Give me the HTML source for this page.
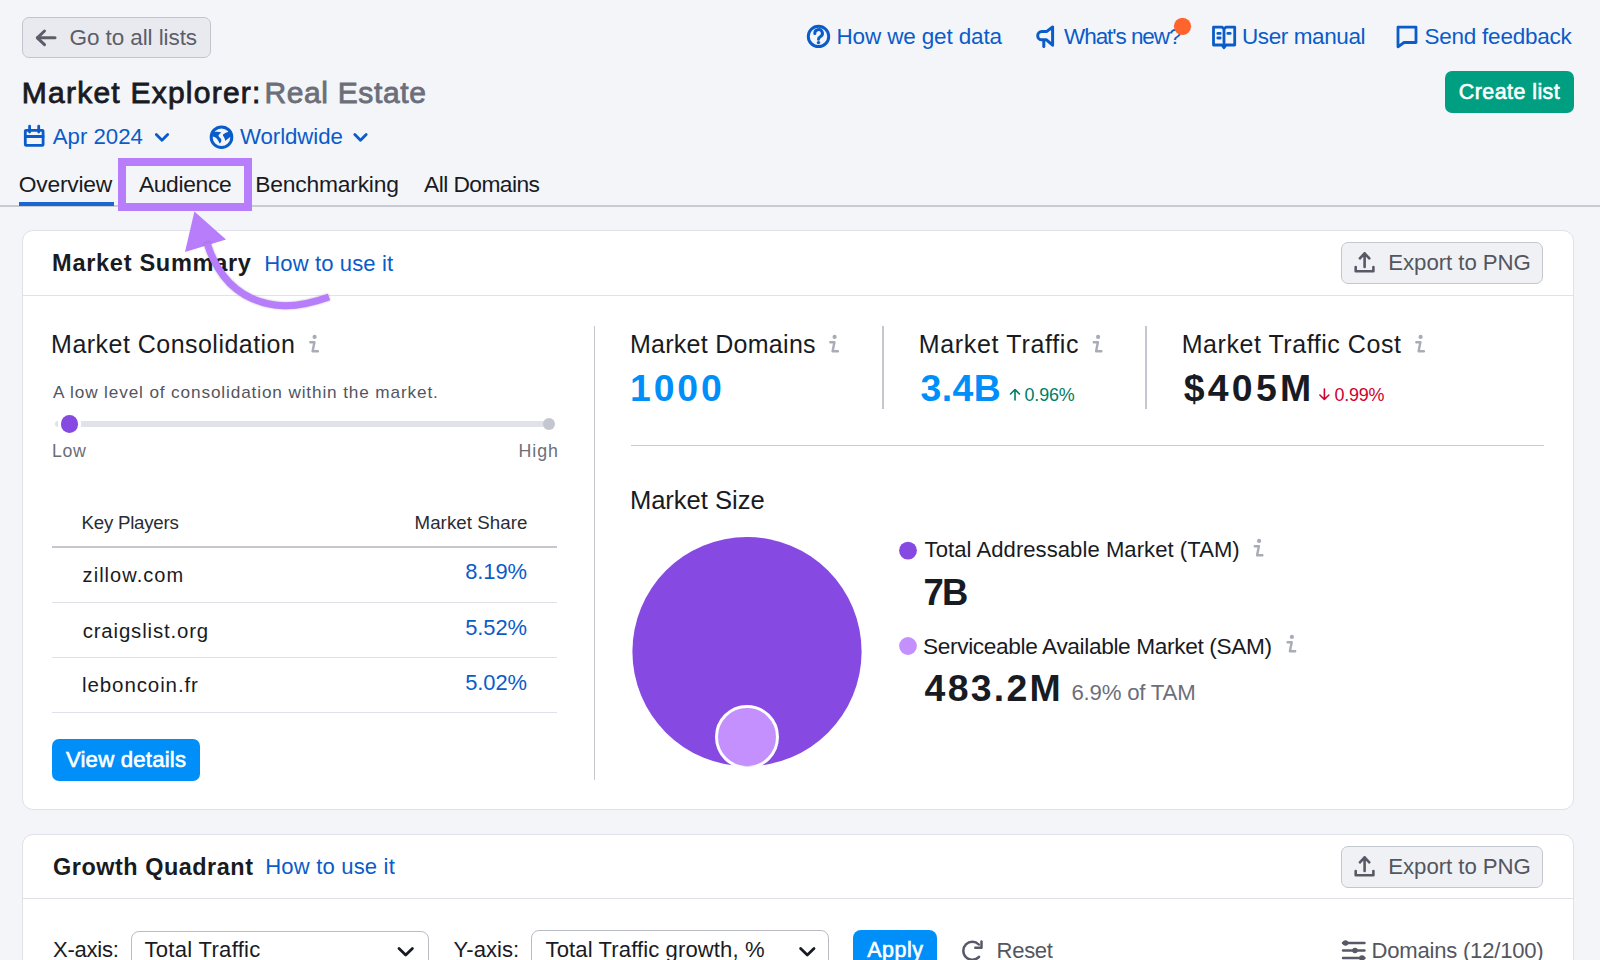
<!DOCTYPE html>
<html><head><meta charset="utf-8">
<style>
html,body{margin:0;padding:0;}
body{width:1600px;height:960px;overflow:hidden;background:#f4f5f9;position:relative;font-family:"Liberation Sans",sans-serif;}
.t{position:absolute;line-height:0;white-space:nowrap;}
.abs{position:absolute;}
.card{position:absolute;background:#fff;border:1px solid #e0e1e9;border-radius:11px;box-sizing:border-box;}
.hline{position:absolute;height:1px;background:#e0e1e9;}
.btn-gray{position:absolute;box-sizing:border-box;background:#f0f1f5;border:1px solid #c4c7cf;border-radius:7px;}
svg.ov{position:absolute;left:0;top:0;}
</style></head><body>
<!-- back button -->
<div class="btn-gray" style="left:22.3px;top:17.2px;width:188.5px;height:41.3px;background:#e9eaef;border-color:#c2c5cd;border-width:1.3px"></div>
<!-- tabs line -->
<div class="abs" style="left:0;top:205px;width:1600px;height:1.5px;background:#c9cbd3"></div>
<div class="abs" style="left:19px;top:202px;width:95px;height:4px;background:#1b66d1;"></div>
<!-- create list -->
<div class="abs" style="left:1445px;top:70.5px;width:129px;height:42px;border-radius:7px;background:#009f81"></div>
<!-- card 1 -->
<div class="card" style="left:21.5px;top:229.5px;width:1552.3px;height:580.5px;"></div>
<div class="hline" style="left:23px;top:294.5px;width:1550px;height:1.5px"></div>
<div class="btn-gray" style="left:1341px;top:242px;width:202px;height:41.5px;"></div>
<!-- divider -->
<div class="abs" style="left:593.5px;top:326px;width:1.6px;height:454px;background:#c4c7cf"></div>
<!-- slider -->
<div class="abs" style="left:55px;top:421px;width:491px;height:6px;border-radius:3px;background:#e0e1e9"></div>
<div class="abs" style="left:543px;top:418px;width:12px;height:12px;border-radius:50%;background:#c4c7cf"></div>
<div class="abs" style="left:57.8px;top:412.3px;width:23.4px;height:23.4px;border-radius:50%;background:#fff"></div>
<div class="abs" style="left:60.7px;top:415.2px;width:17.6px;height:17.6px;border-radius:50%;background:#8649e1"></div>
<!-- table lines -->
<div class="abs" style="left:52px;top:546px;width:505px;height:2px;background:#c4c7cf"></div>
<div class="abs" style="left:52px;top:601.5px;width:505px;height:1.3px;background:#e0e1e9"></div>
<div class="abs" style="left:52px;top:657px;width:505px;height:1.3px;background:#e0e1e9"></div>
<div class="abs" style="left:52px;top:712px;width:505px;height:1.3px;background:#e0e1e9"></div>
<!-- view details -->
<div class="abs" style="left:52px;top:738.5px;width:148px;height:42px;border-radius:7px;background:#008ff8"></div>
<!-- metrics dividers -->
<div class="abs" style="left:882px;top:326px;width:1.6px;height:83px;background:#c4c7cf"></div>
<div class="abs" style="left:1145.2px;top:326px;width:1.6px;height:83px;background:#c4c7cf"></div>
<div class="abs" style="left:631px;top:444.6px;width:912.5px;height:1.8px;background:#c9cbd3"></div>
<!-- card 2 -->
<div class="card" style="left:21.5px;top:833.5px;width:1552.3px;height:200px;"></div>
<div class="hline" style="left:23px;top:897.5px;width:1550px;height:1.5px"></div>
<div class="btn-gray" style="left:1341px;top:846px;width:202px;height:41.5px;"></div>
<div class="abs" style="left:130.5px;top:930.5px;width:298px;height:60px;box-sizing:border-box;border:1.3px solid #b9bcc6;border-radius:8px;background:#fff"></div>
<div class="abs" style="left:531px;top:930px;width:298px;height:60px;box-sizing:border-box;border:1.3px solid #b9bcc6;border-radius:8px;background:#fff"></div>
<div class="abs" style="left:853px;top:929.8px;width:84px;height:60px;border-radius:8px;background:#008ff8"></div>

<div class="t" style="left:69.5px;top:37.8px;font-size:22.51px;font-weight:400;color:#5b5e69;letter-spacing:-0.089px">Go to all lists</div>
<div class="t" style="left:21.8px;top:92.5px;font-size:30.00px;font-weight:400;color:#191b23;letter-spacing:1.235px;-webkit-text-stroke:0.84px #191b23">Market Explorer:</div>
<div class="t" style="left:264.4px;top:92.5px;font-size:30.00px;font-weight:400;color:#6c6e79;letter-spacing:0.646px;-webkit-text-stroke:0.84px #6c6e79">Real Estate</div>
<div class="t" style="left:52.8px;top:136.5px;font-size:22.22px;font-weight:400;color:#0a5cc9;letter-spacing:-0.009px">Apr 2024</div>
<div class="t" style="left:240.0px;top:136.5px;font-size:22.22px;font-weight:400;color:#0a5cc9;letter-spacing:-0.062px">Worldwide</div>
<div class="t" style="left:18.8px;top:184.1px;font-size:22.81px;font-weight:400;color:#191b23;letter-spacing:-0.220px">Overview</div>
<div class="t" style="left:138.9px;top:184.1px;font-size:22.81px;font-weight:400;color:#191b23;letter-spacing:-0.326px">Audience</div>
<div class="t" style="left:255.3px;top:184.1px;font-size:22.81px;font-weight:400;color:#191b23;letter-spacing:-0.195px">Benchmarking</div>
<div class="t" style="left:424.0px;top:184.1px;font-size:22.81px;font-weight:400;color:#191b23;letter-spacing:-0.572px">All Domains</div>
<div class="t" style="left:836.5px;top:37.0px;font-size:22.51px;font-weight:400;color:#0a5cc9;letter-spacing:-0.149px">How we get data</div>
<div class="t" style="left:1064.0px;top:37.0px;font-size:22.51px;font-weight:400;color:#0a5cc9;letter-spacing:-1.059px">What's new?</div>
<div class="t" style="left:1242.0px;top:37.0px;font-size:22.51px;font-weight:400;color:#0a5cc9;letter-spacing:-0.405px">User manual</div>
<div class="t" style="left:1424.5px;top:37.0px;font-size:22.51px;font-weight:400;color:#0a5cc9;letter-spacing:-0.239px">Send feedback</div>
<div class="t" style="left:1458.8px;top:91.8px;font-size:21.43px;font-weight:400;color:#ffffff;letter-spacing:0.449px;-webkit-text-stroke:0.60px #ffffff">Create list</div>
<div class="t" style="left:52.1px;top:263.1px;font-size:23.57px;font-weight:700;color:#191b23;letter-spacing:0.686px">Market Summary</div>
<div class="t" style="left:264.3px;top:264.4px;font-size:22.07px;font-weight:400;color:#0a5cc9;letter-spacing:0.109px">How to use it</div>
<div class="t" style="left:1388.3px;top:263.0px;font-size:22.22px;font-weight:400;color:#53565f;letter-spacing:-0.056px">Export to PNG</div>
<div class="t" style="left:51.1px;top:343.8px;font-size:25.01px;font-weight:400;color:#191b23;letter-spacing:0.472px">Market Consolidation</div>
<div class="t" style="left:53.0px;top:391.5px;font-size:17.22px;font-weight:400;color:#53555e;letter-spacing:0.862px">A low level of consolidation within the market.</div>
<div class="t" style="left:52.0px;top:451.4px;font-size:17.80px;font-weight:400;color:#6c6e79;letter-spacing:0.602px">Low</div>
<div class="t" style="left:518.6px;top:451.4px;font-size:17.80px;font-weight:400;color:#6c6e79;letter-spacing:0.899px">High</div>
<div class="t" style="left:81.6px;top:522.7px;font-size:18.69px;font-weight:400;color:#2a2c35;letter-spacing:-0.249px">Key Players</div>
<div class="t" style="left:414.5px;top:522.7px;font-size:18.69px;font-weight:400;color:#2a2c35;letter-spacing:0.073px">Market Share</div>
<div class="t" style="left:82.6px;top:574.6px;font-size:20.00px;font-weight:400;color:#191b23;letter-spacing:1.047px">zillow.com</div>
<div class="t" style="left:82.7px;top:630.5px;font-size:20.41px;font-weight:400;color:#191b23;letter-spacing:0.838px">craigslist.org</div>
<div class="t" style="left:82.0px;top:685.4px;font-size:20.54px;font-weight:400;color:#191b23;letter-spacing:0.890px">leboncoin.fr</div>
<div class="t" style="left:465.2px;top:572.4px;font-size:21.92px;font-weight:400;color:#0a5cc9;letter-spacing:-0.059px">8.19%</div>
<div class="t" style="left:465.2px;top:627.9px;font-size:21.92px;font-weight:400;color:#0a5cc9;letter-spacing:-0.059px">5.52%</div>
<div class="t" style="left:465.2px;top:682.9px;font-size:21.92px;font-weight:400;color:#0a5cc9;letter-spacing:-0.059px">5.02%</div>
<div class="t" style="left:65.9px;top:759.6px;font-size:22.14px;font-weight:400;color:#ffffff;letter-spacing:0.226px;-webkit-text-stroke:0.62px #ffffff">View details</div>
<div class="t" style="left:629.9px;top:344.0px;font-size:25.01px;font-weight:400;color:#191b23;letter-spacing:0.285px">Market Domains</div>
<div class="t" style="left:630.0px;top:388.3px;font-size:37.43px;font-weight:700;color:#008ff8;letter-spacing:2.863px">1000</div>
<div class="t" style="left:918.7px;top:344.0px;font-size:25.01px;font-weight:400;color:#191b23;letter-spacing:0.683px">Market Traffic</div>
<div class="t" style="left:920.6px;top:388.3px;font-size:37.43px;font-weight:700;color:#008ff8;letter-spacing:0.400px">3.4B</div>
<div class="t" style="left:1024.6px;top:394.5px;font-size:17.95px;font-weight:400;color:#007c65;letter-spacing:-0.203px">0.96%</div>
<div class="t" style="left:1181.7px;top:344.0px;font-size:25.01px;font-weight:400;color:#191b23;letter-spacing:0.549px">Market Traffic Cost</div>
<div class="t" style="left:1183.7px;top:388.3px;font-size:37.43px;font-weight:700;color:#191b23;letter-spacing:3.271px">$405M</div>
<div class="t" style="left:1334.5px;top:394.5px;font-size:17.95px;font-weight:400;color:#d1002f;letter-spacing:-0.253px">0.99%</div>
<div class="t" style="left:629.9px;top:500.1px;font-size:25.60px;font-weight:400;color:#191b23;letter-spacing:-0.038px">Market Size</div>
<div class="t" style="left:924.6px;top:550.2px;font-size:22.07px;font-weight:400;color:#191b23;letter-spacing:0.057px">Total Addressable Market (TAM)</div>
<div class="t" style="left:923.6px;top:592.6px;font-size:36.43px;font-weight:700;color:#191b23;letter-spacing:-1.847px">7B</div>
<div class="t" style="left:923.0px;top:645.8px;font-size:22.66px;font-weight:400;color:#191b23;letter-spacing:-0.363px">Serviceable Available Market (SAM)</div>
<div class="t" style="left:924.6px;top:688.1px;font-size:37.43px;font-weight:700;color:#191b23;letter-spacing:2.259px">483.2M</div>
<div class="t" style="left:1071.4px;top:692.6px;font-size:22.22px;font-weight:400;color:#6c6e79;letter-spacing:-0.209px">6.9% of TAM</div>
<div class="t" style="left:53.0px;top:867.2px;font-size:23.43px;font-weight:700;color:#191b23;letter-spacing:0.525px">Growth Quadrant</div>
<div class="t" style="left:265.2px;top:866.6px;font-size:22.07px;font-weight:400;color:#0a5cc9;letter-spacing:0.175px">How to use it</div>
<div class="t" style="left:1388.3px;top:867.0px;font-size:22.22px;font-weight:400;color:#53565f;letter-spacing:-0.056px">Export to PNG</div>
<div class="t" style="left:53.0px;top:950.1px;font-size:22.07px;font-weight:400;color:#191b23;letter-spacing:-0.266px">X-axis:</div>
<div class="t" style="left:144.4px;top:950.1px;font-size:22.07px;font-weight:400;color:#191b23;letter-spacing:0.294px">Total Traffic</div>
<div class="t" style="left:453.6px;top:950.1px;font-size:22.07px;font-weight:400;color:#191b23;letter-spacing:0.022px">Y-axis:</div>
<div class="t" style="left:545.6px;top:950.1px;font-size:22.07px;font-weight:400;color:#191b23;letter-spacing:0.104px">Total Traffic growth, %</div>
<div class="t" style="left:867.3px;top:950.4px;font-size:21.43px;font-weight:400;color:#ffffff;letter-spacing:0.489px;-webkit-text-stroke:0.60px #ffffff">Apply</div>
<div class="t" style="left:996.6px;top:950.9px;font-size:22.07px;font-weight:400;color:#53565f;letter-spacing:-0.326px">Reset</div>
<div class="t" style="left:1371.5px;top:950.5px;font-size:22.07px;font-weight:400;color:#53565f;letter-spacing:-0.214px">Domains (12/100)</div>

<svg class="ov" width="1600" height="960" viewBox="0 0 1600 960">
 <!-- back arrow -->
 <g fill="none" stroke="#5b5e69" stroke-width="3" stroke-linecap="round" stroke-linejoin="round">
  <path d="M37.5 37.8 H55"/><path d="M44.5 31 L37.3 37.8 L44.5 44.6"/>
 </g>
 <!-- question icon -->
 <g fill="none" stroke="#0a5cc9" stroke-width="3" stroke-linecap="round">
  <circle cx="818.5" cy="36.4" r="10.2"/>
  <path d="M814.8 33.6 A3.8 3.8 0 1 1 820.6 36.6 C819 37.6 818.5 38.2 818.5 39.3"/>
 </g>
 <circle cx="818.5" cy="42.6" r="1.7" fill="#0a5cc9"/>
 <!-- megaphone -->
 <g fill="none" stroke="#0a5cc9" stroke-width="3" stroke-linecap="round" stroke-linejoin="round">
  <path d="M1052.6 27 V45.2 L1046.5 39.8 H1041.8 A4.1 4.1 0 0 1 1041.8 31.6 H1046.5 Z"/>
  <path d="M1043.8 40.5 V46.5"/>
 </g>
 <circle cx="1182.5" cy="26.3" r="8.6" fill="#ff642d"/>
 <!-- book -->
 <g fill="none" stroke="#0a5cc9" stroke-width="2.8" stroke-linejoin="round" stroke-linecap="round">
  <path d="M1213.5 27.2 H1222 L1224 28.8 L1226 27.2 H1234.7 V45 H1226 L1224 47.8 L1222 45 H1213.5 Z"/>
  <path d="M1224 29 V45"/>
  <path d="M1217.8 33.4 H1220.2 M1217.8 38 H1220.2 M1227.8 33.4 H1230.2"/>
 </g>
 <!-- chat -->
 <g fill="none" stroke="#0a5cc9" stroke-width="2.8" stroke-linejoin="round" stroke-linecap="round">
  <path d="M1398 27.2 H1416 V42.5 H1404 L1398 46.8 Z"/>
 </g>
 <!-- calendar -->
 <g fill="none" stroke="#0a5cc9" stroke-width="2.8" stroke-linejoin="round" stroke-linecap="round">
  <rect x="25.3" y="130.4" width="17.8" height="15" rx="0.8"/>
  <path d="M25.3 136.5 H43.1 M29.6 126.2 V132 M38.7 126.2 V132"/>
 </g>
 <!-- chevrons -->
 <g fill="none" stroke="#0a5cc9" stroke-width="2.8" stroke-linecap="round" stroke-linejoin="round">
  <path d="M156.3 134.5 L162 140.3 L167.7 134.5"/>
  <path d="M354.8 134.5 L360.5 140.3 L366.2 134.5"/>
 </g>
 <!-- globe -->
 <circle cx="221.5" cy="137.2" r="10.3" fill="none" stroke="#0a5cc9" stroke-width="3"/>
 <path fill="#0a5cc9" d="M211.8 133.2 C214 131.8 218 131.3 221.3 132.4 C220.2 133.4 218.2 134.6 218.5 136 C219 137.3 221.6 138.3 221.4 140.5 C221.2 142 220.4 143 219.6 143.5 C218.6 141.2 217.2 138.8 215.4 137.6 C214.2 136.8 212.8 136.6 211.6 136.6 Z"/>
 <path fill="#0a5cc9" d="M223 134.4 C225 133 227.5 132 230 131.8 L231.2 136.4 C229 137.8 226.8 139.4 225.3 140.9 C225 139 224 137 223 135.8 Z"/>
 <!-- export icons -->
 <g fill="none" stroke="#575a66" stroke-width="2.6" stroke-linecap="round" stroke-linejoin="round">
  <path d="M1364.6 253.3 V267 M1359.9 258.4 L1364.6 253.3 L1369.3 258.4 M1355.7 267 V271.3 H1373.4 V267"/>
  <path d="M1364.6 857.3 V871 M1359.9 862.4 L1364.6 857.3 L1369.3 862.4 M1355.7 871 V875.3 H1373.4 V871"/>
 </g>
 <!-- info icons -->
 <g id="info" fill="none" stroke="#a9abb6" stroke-width="2.4" stroke-linecap="round" stroke-linejoin="round">
<g transform="translate(829,335)"><circle cx="5.6" cy="1.9" r="2.1" fill="#a9abb6" stroke="none"/><path d="M1.3 7.3 H5.4 L3.6 16.2 H8.9"/></g>
<g transform="translate(309,335)"><circle cx="5.6" cy="1.9" r="2.1" fill="#a9abb6" stroke="none"/><path d="M1.3 7.3 H5.4 L3.6 16.2 H8.9"/></g>
<g transform="translate(1092.5,335)"><circle cx="5.6" cy="1.9" r="2.1" fill="#a9abb6" stroke="none"/><path d="M1.3 7.3 H5.4 L3.6 16.2 H8.9"/></g>
<g transform="translate(1415,335)"><circle cx="5.6" cy="1.9" r="2.1" fill="#a9abb6" stroke="none"/><path d="M1.3 7.3 H5.4 L3.6 16.2 H8.9"/></g>
<g transform="translate(1253.5,539)"><circle cx="5.6" cy="1.9" r="2.1" fill="#a9abb6" stroke="none"/><path d="M1.3 7.3 H5.4 L3.6 16.2 H8.9"/></g>
<g transform="translate(1286.3,635)"><circle cx="5.6" cy="1.9" r="2.1" fill="#a9abb6" stroke="none"/><path d="M1.3 7.3 H5.4 L3.6 16.2 H8.9"/></g>
 </g>
 <!-- arrows up/down -->
 <g fill="none" stroke-width="1.6" stroke-linecap="round" stroke-linejoin="round">
  <path stroke="#007c65" d="M1015 389.5 V400 M1010.5 394 L1015 389.5 L1019.5 394"/>
  <path stroke="#d1002f" d="M1324.4 389 V399.5 M1319.9 395 L1324.4 399.5 L1328.9 395"/>
 </g>
 <!-- market size circles -->
 <defs><clipPath id="cc"><rect x="600" y="500" width="300" height="266"/></clipPath></defs>
 <circle cx="747" cy="651.6" r="114.6" fill="#8649e1"/>
 <g clip-path="url(#cc)"><circle cx="747" cy="737" r="30.5" fill="#c490fd" stroke="#fff" stroke-width="3"/></g>
 <circle cx="908" cy="550.6" r="8.9" fill="#8649e1"/>
 <circle cx="908" cy="646" r="8.9" fill="#c490fd"/>
 <!-- select chevrons -->
 <g fill="none" stroke="#191b23" stroke-width="2.8" stroke-linecap="round" stroke-linejoin="round">
  <path d="M399 948.5 L405.7 955 L412.4 948.5"/>
  <path d="M800.6 948.5 L807.3 955 L814 948.5"/>
 </g>
 <!-- reset icon -->
 <g fill="none" stroke="#575a66" stroke-width="2.5" stroke-linecap="round" stroke-linejoin="round">
  <path d="M978.8 944.5 A9 9 0 1 0 979 956.8"/>
  <path d="M981.5 941.5 V947.8 H975.3"/>
 </g>
 <!-- filter icon -->
 <g fill="none" stroke="#575a66" stroke-width="2.4" stroke-linecap="round">
  <path d="M1343 943 H1364.5 M1343 950.5 H1364.5 M1343 958 H1364.5"/>
 </g>
 <circle cx="1345.5" cy="943" r="2.8" fill="#575a66"/>
 <circle cx="1355" cy="950.5" r="2.8" fill="#575a66"/>
 <circle cx="1362" cy="958" r="2.8" fill="#575a66"/>
 <!-- annotation -->
 <g fill="#b77dfb">
  <rect x="118" y="158" width="134" height="8"/>
  <rect x="118" y="203" width="134" height="8"/>
  <rect x="118" y="158" width="8" height="53"/>
  <rect x="244" y="158" width="8" height="53"/>
  <path d="M194.4 211.5 L185 252 L226 239.4 Z"/>
 </g>
 <path d="M207 243 C218 278 240 300 275 305 C295 308 315 302 329 297" fill="none" stroke="#b77dfb" stroke-width="7" style="filter:drop-shadow(0 0 1.2px rgba(60,40,90,0.35))"/>
</svg>
</body></html>
